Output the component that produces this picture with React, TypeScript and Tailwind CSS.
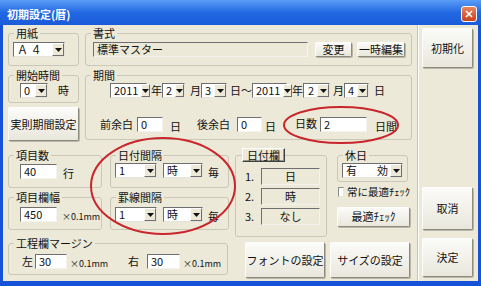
import React from "react";

const FONT = "font-['Noto_Sans_CJK_JP','Noto_Sans',sans-serif]";

function Arrow() {
  return (
    <svg width="7" height="4" viewBox="0 0 7 4">
      <path d="M0 0h7L3.5 4z" fill="#111" />
    </svg>
  );
}

function Combo({ w, text, right, spread }: { w: string; text?: string; right?: boolean; spread?: [string, string] }) {
  return (
    <div className={`${w} h-[15px] flex shrink-0 bg-white border border-t-[#6f6f6f] border-l-[#6f6f6f] border-r-[#e6e4da] border-b-[#e6e4da]`}>
      {spread ? (
        <span className="flex-1 flex items-center justify-between pl-[3px] pr-[2px] text-[11px] leading-none">
          <span>{spread[0]}</span>
          <span>{spread[1]}</span>
        </span>
      ) : (
        <span className={`flex-1 flex items-center px-[3px] text-[11px] leading-none ${right ? "justify-end" : ""}`}>{text}</span>
      )}
      <span className="w-[12px] h-full flex items-center justify-center bg-[#ece9d8] border border-t-white border-l-white border-r-[#6f6f6f] border-b-[#6f6f6f]">
        <Arrow />
      </span>
    </div>
  );
}

function Field({ w, text, cls = "h-[15px] bg-white", center }: { w: string; text?: string; cls?: string; center?: boolean }) {
  return (
    <div className={`${w} ${cls} flex items-center shrink-0 border border-t-[#6f6f6f] border-l-[#6f6f6f] border-r-[#f4f3ee] border-b-[#f4f3ee] text-[11px] leading-none ${center ? "justify-center" : "pl-[3px]"}`}>
      {text}
    </div>
  );
}

function Btn({ className = "", children }: { className?: string; children: React.ReactNode }) {
  return (
    <div className={`flex items-center justify-center shrink-0 whitespace-nowrap text-[11px] leading-none bg-linear-to-b from-[#fbfbf9] to-[#e9e7dc] border border-t-[#fdfdfb] border-l-[#fdfdfb] border-r-[#8d8b7e] border-b-[#8d8b7e] shadow-[1px_1px_0_#b9b7aa] rounded-[2px] ${className}`}>
      {children}
    </div>
  );
}

function Group({ label, className = "", legend = "", children }: { label: React.ReactNode; className?: string; legend?: string; children?: React.ReactNode }) {
  return (
    <fieldset className={`border border-[#c9c7b7] rounded-[3px] shrink-0 min-w-0 ${className}`}>
      <legend className={`ml-[5px] px-[2px] text-[11px] leading-[11px] whitespace-nowrap ${legend}`}>{label}</legend>
      {children}
    </fieldset>
  );
}

function T({ className = "", size = "text-[11px]", children }: { className?: string; size?: string; children: React.ReactNode }) {
  return <span className={`shrink-0 whitespace-nowrap leading-none ${size} ${className}`}>{children}</span>;
}

export default function App() {
  return (
    <div className={`relative w-[481px] h-[286px] overflow-hidden bg-[#1652d8] flex flex-col text-[#111] ${FONT}`}>
      {/* title bar */}
      <div className="h-[25px] shrink-0 flex items-center justify-between pl-[7px] pr-[4px] pt-[3px] bg-linear-to-b from-[#5a9cf6] via-[#2268e2] to-[#1a5bd9]">
        <span className="text-white text-[11px] font-bold leading-none">初期設定(暦)</span>
        <div className="w-[16px] h-[16px] rounded-[3px] border border-white bg-linear-to-b from-[#e8825c] to-[#c9411c] flex items-center justify-center">
          <svg width="8" height="8" viewBox="0 0 8 8">
            <path d="M1 1L7 7M7 1L1 7" stroke="#fff" strokeWidth="1.6" />
          </svg>
        </div>
      </div>

      {/* body */}
      <div className="mx-[3px] mb-[5px] flex-1 bg-[#ece9d8] flex">
        {/* left area */}
        <div className="w-[414px] pl-[5px] pt-[3px] flex flex-col">
          {/* row 1 */}
          <div className="flex">
            <div className="w-[71px] flex flex-col">
              <Group label="用紙" className="h-[38px]">
                <div className="pt-[3px] pl-[4px]">
                  <Combo w="w-[52px]" text="Ａ ４" />
                </div>
              </Group>
              <Group label="開始時間" className="h-[33px] mt-[4px]">
                <div className="pt-[2px] pl-[11px] flex items-center">
                  <Combo w="w-[28px]" text="0" />
                  <T className="ml-[10px]">時</T>
                </div>
              </Group>
              <Btn className="mt-[4px] h-[34px] w-[71px]">実則期間設定</Btn>
            </div>
            <div className="ml-[6px] w-[327px] flex flex-col">
              <Group label="書式" className="h-[38px]">
                <div className="pt-[3px] pl-[7px] flex items-center">
                  <Field w="w-[215px]" text="標準マスター" cls="h-[15px] bg-[#ece9d8]" />
                  <Btn className="ml-[7px] w-[37px] h-[15px]">変更</Btn>
                  <Btn className="ml-[5px] w-[48px] h-[15px]">一時編集</Btn>
                </div>
              </Group>
              <Group label="期間" className="h-[70px] mt-[4px]">
                <div className="pt-[2px] pl-[24px] flex items-center">
                  <Combo w="w-[37px]" text="2011" />
                  <T className="ml-[4px] w-[11px]">年</T>
                  <Combo w="w-[23px]" text="2" right />
                  <T className="ml-[5px] w-[11px]">月</T>
                  <Combo w="w-[26px]" text="3" right />
                  <T className="ml-[3px] w-[22px]">日～</T>
                  <Combo w="w-[35px]" text="2011" />
                  <T className="ml-[5px] w-[11px]">年</T>
                  <Combo w="w-[27px]" text="2" right />
                  <T className="ml-[3px] w-[11px]">月</T>
                  <Combo w="w-[25px]" text="4" right />
                  <T className="ml-[5px] w-[11px]">日</T>
                </div>
                <div className="mt-[19px] pl-[14px] flex items-center">
                  <T className="w-[32px]">前余白</T>
                  <Field w="ml-[5px] w-[26px]" text="0" />
                  <T className="ml-[7px] w-[11px] mt-[4px]">日</T>
                  <T className="ml-[16px] w-[33px]">後余白</T>
                  <Field w="ml-[7px] w-[25px]" text="0" />
                  <T className="ml-[3px] w-[11px] mt-[4px]">日</T>
                  <T className="ml-[19px] w-[22px] -mt-[2px]">日数</T>
                  <Field w="ml-[3px] w-[47px]" text="2" />
                  <T className="ml-[8px] w-[22px] mt-[4px]">日間</T>
                </div>
              </Group>
            </div>
          </div>

          {/* row 2 */}
          <div className="mt-[9px] flex h-[87px]">
            <div className="w-[94px] flex flex-col">
              <Group label="項目数" className="h-[38px]">
                <div className="pt-[3px] pl-[11px] flex items-center">
                  <Field w="w-[37px]" text="40" />
                  <T className="ml-[6px] mt-[3px]">行</T>
                </div>
              </Group>
              <Group label="項目欄幅" className="h-[38px] mt-[4px]">
                <div className="pt-[4px] pl-[11px] flex items-center">
                  <Field w="w-[37px]" text="450" />
                  <T className="ml-[5px] mt-[3px]" size="text-[9px]">×0.1mm</T>
                </div>
              </Group>
            </div>
            <div className="ml-[8px] w-[119px] flex flex-col">
              <Group label="日付間隔" className="h-[38px]">
                <div className="pt-[2px] pl-[4px] flex items-center">
                  <Combo w="w-[42px]" text="1" />
                  <Combo w="ml-[6px] w-[40px]" text="時" />
                  <T className="ml-[5px] mt-[3px]">毎</T>
                </div>
              </Group>
              <Group label="罫線間隔" className="h-[38px] mt-[4px]">
                <div className="pt-[4px] pl-[4px] flex items-center">
                  <Combo w="w-[42px]" text="1" />
                  <Combo w="ml-[6px] w-[40px]" text="時" />
                  <T className="ml-[5px] mt-[3px]">毎</T>
                </div>
              </Group>
            </div>
            <div className="ml-[6px] w-[92px] flex flex-col">
              <Group
                label="日付欄"
                className="h-[89px] -mt-[2px]"
                legend="h-[14px] w-[43px] ml-[6px] flex items-center justify-center border border-t-white border-l-white border-r-[#404040] border-b-[#404040] shadow-[inset_-1px_-1px_0_#9a988b] bg-[#ece9d8]"
              >
                <div className="pt-[6px] pl-[9px] flex flex-col gap-[3px]">
                  {[
                    ["1.", "日"],
                    ["2.", "時"],
                    ["3.", "なし"],
                  ].map(([n, v]) => (
                    <div key={n} className="flex items-center">
                      <T className="w-[16px]">{n}</T>
                      <Field w="w-[59px]" text={v} cls="h-[17px] bg-[#ece9d8]" center />
                    </div>
                  ))}
                </div>
              </Group>
            </div>
            <div className="ml-[3px] w-[80px] flex flex-col">
              <Group label="休日" className="ml-[7px] w-[71px] h-[32px]">
                <div className="pt-[2px] pl-[4px]">
                  <Combo w="w-[61px]" spread={["有", "効"]} />
                </div>
              </Group>
              <div className="mt-[5px] ml-[8px] flex items-center">
                <span className="w-[10px] h-[10px] bg-white border border-t-[#8a8a8a] border-l-[#8a8a8a] border-r-[#e8e8e0] border-b-[#e8e8e0]" />
                <T className="ml-[3px]" size="text-[10.5px]">常に最適ﾁｪｯｸ</T>
              </div>
              <Btn className="mt-[9px] ml-[7px] w-[73px] h-[20px]">最適ﾁｪｯｸ</Btn>
            </div>
          </div>

          <div className="flex">
            <Group label="工程欄マージン" className="mt-[1px] w-[220px] h-[37px]">
              <div className="pt-[5px] pl-[13px] flex items-center">
                <T className="w-[11px]">左</T>
                <Field w="ml-[2px] w-[32px]" text="30" />
                <T className="ml-[3px] mt-[3px] w-[36px]" size="text-[9px]">×0.1mm</T>
                <T className="ml-[22px] w-[11px]">右</T>
                <Field w="ml-[8px] w-[33px]" text="30" />
                <T className="ml-[3px] mt-[3px]" size="text-[9px]">×0.1mm</T>
              </div>
            </Group>
            <Btn className="ml-[17px] mt-[5px] w-[80px] h-[36px]">フォントの設定</Btn>
            <Btn className="ml-[5px] mt-[5px] w-[80px] h-[36px]">サイズの設定</Btn>
          </div>
        </div>

        {/* right column */}
        <div className="flex-1 border-l border-[#c7c4b4] shadow-[inset_1px_0_0_#fff] pl-[4px] flex flex-col">
          <Btn className="mt-[3px] w-[51px] h-[40px]">初期化</Btn>
          <Btn className="mt-[119px] w-[51px] h-[43px]">取消</Btn>
          <Btn className="mt-[8px] w-[51px] h-[39px]">決定</Btn>
        </div>
      </div>

      {/* annotation ellipses */}
      <svg className="absolute left-0 top-0 pointer-events-none" width="481" height="286">
        <ellipse cx="341" cy="125" rx="57" ry="18" fill="none" stroke="#c8262c" strokeWidth="2" />
        <ellipse cx="163" cy="186" rx="72" ry="48" fill="none" stroke="#c8262c" strokeWidth="2" />
      </svg>
    </div>
  );
}
